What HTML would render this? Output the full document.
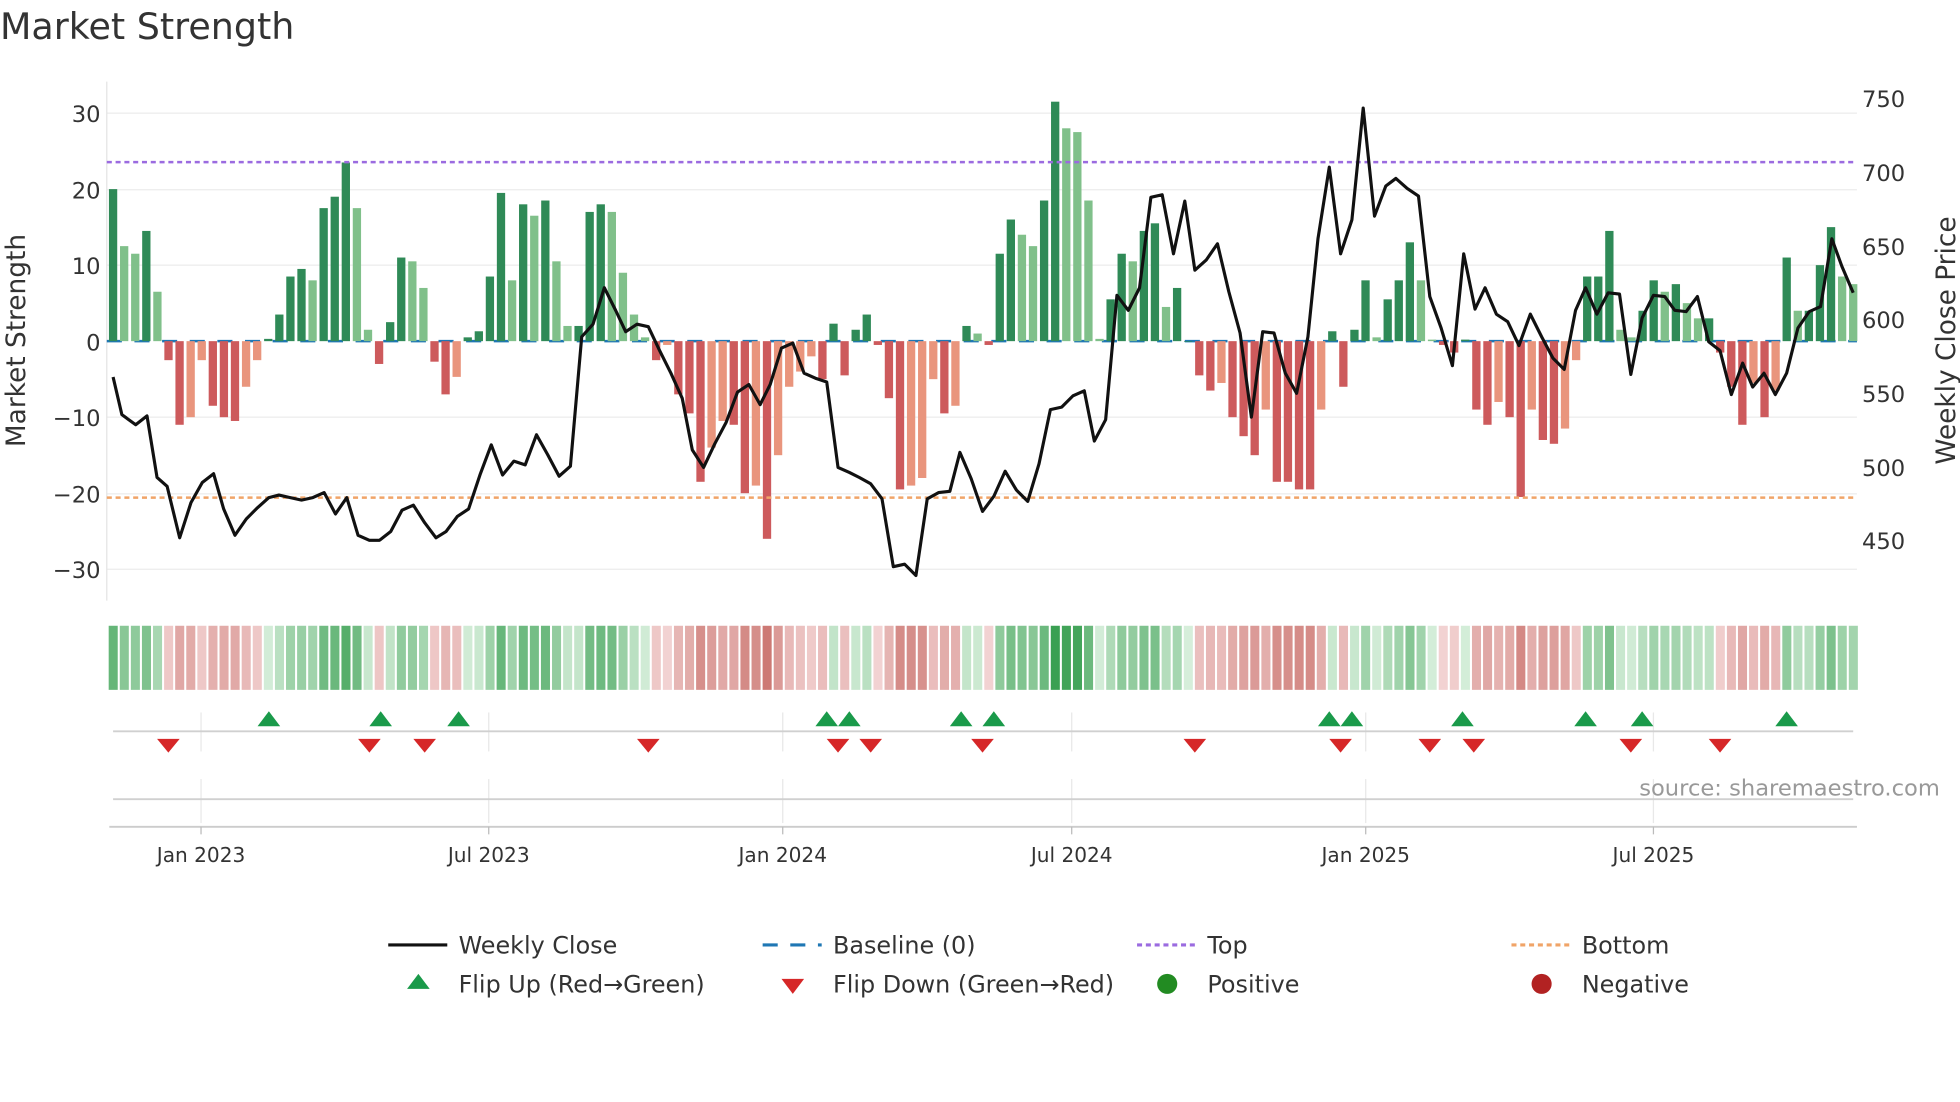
<!DOCTYPE html>
<html><head><meta charset="utf-8">
<style>
html,body{margin:0;padding:0;background:#fff;width:1960px;height:1102px;overflow:hidden}
svg{display:block}
text{font-family:"DejaVu Sans","Liberation Sans",sans-serif;fill:#333}
</style></head>
<body>
<svg id="c" width="1960" height="1102" viewBox="0 0 1560 877" preserveAspectRatio="none" xmlns="http://www.w3.org/2000/svg">
<rect width="1560" height="877" fill="#fff"/>
<text x="0" y="31" font-size="29" fill="#333">Market Strength</text>
<g stroke="#ececec" stroke-width="1">
<line x1="85" y1="90" x2="1478" y2="90"/><line x1="85" y1="151" x2="1478" y2="151"/>
<line x1="85" y1="211" x2="1478" y2="211"/><line x1="85" y1="332" x2="1478" y2="332"/>
<line x1="85" y1="393" x2="1478" y2="393"/><line x1="85" y1="453" x2="1478" y2="453"/>
</g>
<line x1="85" y1="65" x2="85" y2="478" stroke="#e4e4e4"/>
<g font-size="18" text-anchor="end">
<text x="80" y="97">30</text><text x="80" y="158">20</text><text x="80" y="218">10</text>
<text x="80" y="279">0</text><text x="80" y="339">−10</text><text x="80" y="400">−20</text><text x="80" y="460">−30</text>
</g>
<g font-size="18">
<text x="1482" y="85">750</text><text x="1482" y="144">700</text><text x="1482" y="203">650</text>
<text x="1482" y="261">600</text><text x="1482" y="320">550</text><text x="1482" y="379">500</text><text x="1482" y="437">450</text>
</g>
<text transform="translate(20,271) rotate(-90)" font-size="21" text-anchor="middle">Market Strength</text>
<text transform="translate(1556,271) rotate(-90)" font-size="21" text-anchor="middle">Weekly Close Price</text>
<line x1="85" y1="271.5" x2="1478" y2="271.5" stroke="#1f77b4" stroke-width="2" stroke-dasharray="12,10"/>
<g id="bars"></g>
<line x1="85" y1="129" x2="1478" y2="129" stroke="#9b6be0" stroke-width="2" stroke-dasharray="4,3"/>
<line x1="85" y1="396" x2="1478" y2="396" stroke="#f0a468" stroke-width="2" stroke-dasharray="4,3"/>
<polyline id="price" fill="none" stroke="#111" stroke-width="2.5" stroke-linejoin="round"/>
<g id="strip"></g>
<g stroke="#e8e8e8" stroke-width="1">
<line x1="160" y1="567" x2="160" y2="598"/><line x1="389" y1="567" x2="389" y2="598"/><line x1="623" y1="567" x2="623" y2="598"/>
<line x1="853" y1="567" x2="853" y2="598"/><line x1="1087" y1="567" x2="1087" y2="598"/><line x1="1316" y1="567" x2="1316" y2="598"/>
<line x1="160" y1="620" x2="160" y2="655"/><line x1="389" y1="620" x2="389" y2="655"/><line x1="623" y1="620" x2="623" y2="655"/>
<line x1="853" y1="620" x2="853" y2="655"/><line x1="1087" y1="620" x2="1087" y2="655"/><line x1="1316" y1="620" x2="1316" y2="655"/>
</g>
<line x1="90" y1="582" x2="1475" y2="582" stroke="#d0d0d0" stroke-width="1.5"/>
<line x1="90" y1="636" x2="1475" y2="636" stroke="#d0d0d0" stroke-width="1.5"/>
<g id="marks"></g>
<text x="1544" y="633" font-size="18" text-anchor="end" style="fill:#999">source: sharemaestro.com</text>
<line x1="87" y1="658" x2="1478" y2="658" stroke="#ccc" stroke-width="1.5"/>
<g stroke="#bbb"><line x1="160" y1="658" x2="160" y2="664"/><line x1="389" y1="658" x2="389" y2="664"/><line x1="623" y1="658" x2="623" y2="664"/><line x1="853" y1="658" x2="853" y2="664"/><line x1="1087" y1="658" x2="1087" y2="664"/><line x1="1316" y1="658" x2="1316" y2="664"/></g>
<g font-size="16" text-anchor="middle">
<text x="160" y="686">Jan 2023</text><text x="389" y="686">Jul 2023</text><text x="623" y="686">Jan 2024</text>
<text x="853" y="686">Jul 2024</text><text x="1087" y="686">Jan 2025</text><text x="1316" y="686">Jul 2025</text>
</g>
<g font-size="19">
<line x1="309" y1="752" x2="356" y2="752" stroke="#111" stroke-width="2.5"/><text x="365" y="759">Weekly Close</text>
<line x1="607" y1="752" x2="654" y2="752" stroke="#1f77b4" stroke-width="2.5" stroke-dasharray="12,10"/><text x="663" y="759">Baseline (0)</text>
<line x1="905" y1="752" x2="952" y2="752" stroke="#9b6be0" stroke-width="2.5" stroke-dasharray="4,3"/><text x="961" y="759">Top</text>
<line x1="1203" y1="752" x2="1250" y2="752" stroke="#f0a468" stroke-width="2.5" stroke-dasharray="4,3"/><text x="1259" y="759">Bottom</text>
<polygon points="333,775 324,787 342,787" fill="#1a9a4a"/><text x="365" y="790">Flip Up (Red→Green)</text>
<polygon points="622,779 640,779 631,791" fill="#d62728"/><text x="663" y="790">Flip Down (Green→Red)</text>
<circle cx="929" cy="783" r="8" fill="#228b22"/><text x="961" y="790">Positive</text>
<circle cx="1227" cy="783" r="8" fill="#b22222"/><text x="1259" y="790">Negative</text>
</g>
</svg>
<script>
var V=[20,12.5,11.5,14.5,6.5,-2.5,-11,-10,-2.5,-8.5,-10,-10.5,-6,-2.5,0.3,3.5,8.5,9.5,8,17.5,19,23.5,17.5,1.5,-3,2.5,11,10.5,7,-2.7,-7,-4.7,0.5,1.3,8.5,19.5,8,18,16.5,18.5,10.5,2,2,17,18,17,9,3.5,0.5,-2.5,-0.5,-7,-9.5,-18.5,-14,-10.5,-11,-20,-19,-26,-15,-6,-4,-2,-5,2.3,-4.5,1.5,3.5,-0.5,-7.5,-19.5,-19,-18,-5,-9.5,-8.5,2,1,-0.5,11.5,16,14,12.5,18.5,31.5,28,27.5,18.5,0.3,5.5,11.5,10.5,14.5,15.5,4.5,7,0,-4.5,-6.5,-5.5,-10,-12.5,-15,-9,-18.5,-18.5,-19.5,-19.5,-9,1.3,-6,1.5,8,0.5,5.5,8,13,8,0.2,-0.5,-1.5,0.2,-9,-11,-8,-10,-20.5,-9,-13,-13.5,-11.5,-2.5,8.5,8.5,14.5,1.5,0.5,4,8,6.5,7.5,5,3,3,-1.5,-6,-11,-5.5,-10,-6.5,11,4,4,10,15,8.5,7.5];
var P=[[90,300],[97,330],[108,338],[117,331],[125,380],[133,387],[143,428],[152,400],[161,384],[170,377],[178,405],[187,426],[196,413],[205,404],[214,396],[222,394],[231,396],[240,398],[249,396],[258,392],[267,409],[276,396],[285,426],[294,430],[302,430],[311,423],[320,406],[329,402],[338,416],[347,428],[355,423],[364,411],[373,405],[382,378],[391,354],[400,378],[409,367],[418,370],[427,346],[436,362],[445,379],[454,371],[463,268],[472,258],[481,229],[490,247],[498,264],[507,258],[516,260],[525,279],[534,297],[543,317],[551,358],[560,372],[569,353],[578,336],[587,312],[596,306],[605,322],[613,306],[622,277],[631,273],[640,297],[649,301],[658,304],[667,372],[676,376],[684,380],[693,385],[702,397],[711,451],[720,449],[729,458],[738,397],[747,392],[756,391],[764,360],[773,381],[782,407],[791,395],[800,375],[809,390],[818,399],[827,369],[836,326],[845,324],[854,315],[863,311],[871,351],[880,334],[889,235],[898,247],[907,229],[916,157],[925,155],[934,202],[943,160],[951,215],[960,207],[969,194],[978,232],[987,265],[996,332],[1005,264],[1014,265],[1023,297],[1032,313],[1041,268],[1049,190],[1058,133],[1067,202],[1076,175],[1085,86],[1094,172],[1103,148],[1111,142],[1120,150],[1129,156],[1138,236],[1147,261],[1156,291],[1165,202],[1174,246],[1182,229],[1191,250],[1200,256],[1209,275],[1218,250],[1227,268],[1236,285],[1245,294],[1254,247],[1262,229],[1271,250],[1280,233],[1289,234],[1298,298],[1307,253],[1316,235],[1325,236],[1333,247],[1342,248],[1351,236],[1360,272],[1369,279],[1378,314],[1387,289],[1395,308],[1404,297],[1413,314],[1422,297],[1431,261],[1440,248],[1449,244],[1458,190],[1466,212],[1475,233]];
var NS="http://www.w3.org/2000/svg";
function el(t,a,p){var e=document.createElementNS(NS,t);for(var k in a)e.setAttribute(k,a[k]);p.appendChild(e);return e;}
var bars=document.getElementById('bars'),strip=document.getElementById('strip');
var step=(1475-90)/(V.length-1);
function mix(a,b,t){return 'rgb('+a.map(function(v,i){return Math.round(v+(b[i]-v)*t)}).join(',')+')';}
for(var i=0;i<V.length;i++){
 var v=V[i],x=90+i*step,prev=i?V[i-1]:0;
 var dark=Math.abs(v)>=Math.abs(prev)||(prev*v<=0);
 var col=v>=0?(dark?'#2f8a57':'#80c08a'):(dark?'#cd5a5c':'#e9957d');
 var y0=271.5,h=Math.abs(v)*6.05;
 el('rect',{x:x-3.3,y:v>=0?y0-h:y0,width:6.6,height:Math.max(h,0.5),fill:col},bars);
 var t=Math.min(1,Math.abs(v)/30);
 var c=v>=0?mix([214,238,218],[58,160,82],Math.pow(t,0.8)):mix([244,214,214],[200,110,104],Math.pow(t,0.8));
 el('rect',{x:x-4.4+0.9,y:498,width:7.2,height:51,fill:c},strip);
}
document.getElementById('price').setAttribute('points',P.map(function(p){return p.join(',')}).join(' '));
var m=document.getElementById('marks');
[214,303,365,658,676,765,791,1058,1076,1164,1262,1307,1422].forEach(function(x){el('polygon',{points:(x)+',566 '+(x-9)+',578 '+(x+9)+',578',fill:'#1a9a4a'},m);});
[134,294,338,516,667,693,782,951,1067,1138,1173,1298,1369].forEach(function(x){el('polygon',{points:(x-9)+',588 '+(x+9)+',588 '+x+',599',fill:'#d62728'},m);});
</script>
</body></html>
